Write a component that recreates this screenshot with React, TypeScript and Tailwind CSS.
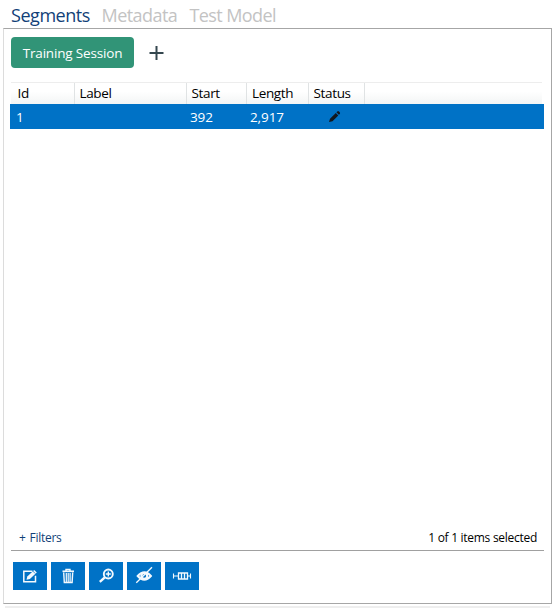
import React from "react";

const FONT = "font-['Open_Sans','Noto_Sans',sans-serif]";

function ToolButton({ children }: { children: React.ReactNode }) {
  return (
    <button className="h-7 w-[34px] bg-[#0072c6]">
      <svg width="34" height="28" viewBox="0 0 34 28" fill="none" stroke="#f4f9fd">
        {children}
      </svg>
    </button>
  );
}

export default function App() {
  return (
    <div className={`h-[608px] w-[556px] overflow-hidden bg-white text-black ${FONT}`}>
      <nav className="flex h-7 pl-[11px] text-[18px] leading-[30px] whitespace-nowrap">
        <span className="w-[90.5px] tracking-[-0.45px] text-[#123f78]">Segments</span>
        <span className="w-[88px] tracking-[-0.55px] text-[#c3c3c3]">Metadata</span>
        <span className="tracking-[-0.6px] text-[#c3c3c3]">Test Model</span>
      </nav>

      <main className="ml-[3px] flex h-[576px] w-[549px] flex-col border border-[#a6a6a6] border-l-[#dcdcdc] pl-[7px]">
        <div className="mt-2 flex h-[31px] items-center">
          <button className="h-[31px] w-[123px] rounded-[4px] bg-[#319477] text-[13.5px] leading-[32px] tracking-[-0.17px] whitespace-nowrap text-white">
            Training Session
          </button>
          <svg className="mt-px ml-[15px]" width="15" height="15" viewBox="0 0 15 15" stroke="#34474f" strokeWidth="2">
            <path d="M7.5 0v14M0.5 7h14" />
          </svg>
        </div>

        <div className="mt-[14px] w-[533px] text-[13.5px]">
          <div className="mr-[2px] flex h-[22px] border-t border-[#ededed] bg-linear-to-b from-white from-40% to-[#f3f5f5] leading-[21px] tracking-[-0.35px]">
            <div className="w-[64px] border-r border-[#e0e3e4] pl-[6.5px]">Id</div>
            <div className="w-[112px] border-r border-[#e0e3e4] pl-[4.5px]">Label</div>
            <div className="w-[60px] border-r border-[#e0e3e4] pl-[4.5px]">Start</div>
            <div className="w-[62px] border-r border-[#e0e3e4] pl-[5px]">Length</div>
            <div className="w-[56px] border-r border-[#e0e3e4] pl-[4.5px]">Status</div>
          </div>
          <div className="-ml-px flex h-[25px] bg-[#0072c6] leading-[26px] tracking-[-0.1px] text-white">
            <div className="w-[180px] pl-[6px]">1</div>
            <div className="w-[60px]">392</div>
            <div className="w-[78px]">2,917</div>
            <svg className="mt-[6px]" width="14" height="14" viewBox="0 0 14 14" fill="#111820">
              <path d="M1 12l1-3.3 5.8-5.8 2.5 2.5-5.8 5.8zM8.4 2.3l.9-.9q.9-.7 1.7.1l.7.7q.8.8.1 1.7l-.9.9z" />
            </svg>
          </div>
        </div>

        <div className="flex-1" />

        <div className="flex h-[26px] w-[533px] items-start justify-between border-b border-[#a0a0a0] pr-[7px] pl-2 text-[12px] leading-[26px] tracking-[-0.28px]">
          <span className="flex gap-1 text-[#123f78]"><span>+</span><span>Filters</span></span>
          <span>1 of 1 items selected</span>
        </div>
        <div className="mt-[11px] mb-[13px] flex gap-1 pl-[2px]">
          <ToolButton>
            <path d="M19.5 9.2h-8.7v10.6h11.7v-6" strokeWidth="1.5" />
            <path d="M13.5 17.8l.8-3.2 6.9-6.6 2.6 2.5-6.9 6.6z" fill="#f4f9fd" stroke="none" />
            <path d="M19.5 8.8l2.8 2.8" stroke="#0072c6" strokeWidth=".7" />
          </ToolButton>
          <ToolButton>
            <path d="M11.5 9.3h11.5" strokeWidth="1.7" />
            <path d="M15 9V7.5h4V9M12.7 10.5l.6 10h7.8l.6-10" strokeWidth="1.4" />
            <path d="M15.3 11v9M17.2 11v9M19.1 11v9" strokeWidth="1.2" />
          </ToolButton>
          <ToolButton>
            <circle cx="19.3" cy="12" r="4.5" strokeWidth="1.9" />
            <path d="M16.8 12h5M19.3 9.5v5" strokeWidth="1.4" />
            <path d="M15.8 15.3l-5 4.5" strokeWidth="2.4" />
          </ToolButton>
          <ToolButton>
            <path d="M10.7 14q6.8-7.5 13.2 0q-6.6 7.3-13.2 0z" strokeWidth="2" />
            <circle cx="17.3" cy="13.9" r="2.9" strokeWidth="2.2" />
            <path d="M9.3 20.8L25 5.3" strokeWidth="1.3" />
          </ToolButton>
          <ToolButton>
            <path d="M8.5 11.5v5M25.5 11.5v5M8.5 14h5M22.5 14h3" strokeWidth="1.1" />
            <path d="M13.5 11h9v6h-9zM16.5 11v6M19.5 11v6" strokeWidth="1.3" />
          </ToolButton>
        </div>
      </main>
      <div className="mt-[2px] ml-[5px] h-[2px] w-[545px] bg-[#eeeeee]" />
    </div>
  );
}
